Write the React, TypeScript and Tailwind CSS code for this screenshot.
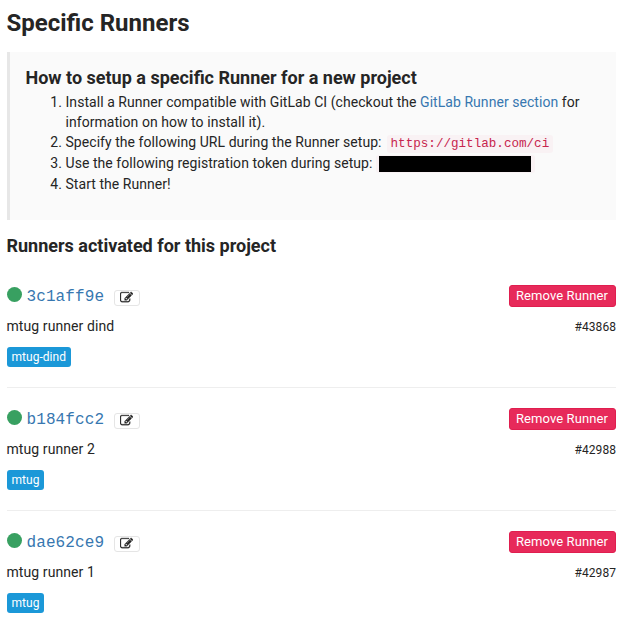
const runners = [
  { token: '3c1aff9e', name: 'mtug runner dind', id: '#43868', tag: 'mtug-dind' },
  { token: 'b184fcc2', name: 'mtug runner 2', id: '#42988', tag: 'mtug' },
  { token: 'dae62ce9', name: 'mtug runner 1', id: '#42987', tag: 'mtug' },
];

function EditIcon() {
  return (
    <svg viewBox="0 0 1792 1792" className="h-[13px] w-[13px]" fill="currentColor" stroke="currentColor" strokeWidth="40">
      <path d="M888 1184l116-116-152-152-116 116v56h96v96h56zm440-720q-16-16-33 1l-350 350q-17 17-1 33t33-1l350-350q17-17 1-33zm80 594v190q0 119-84.5 203.5t-203.5 84.5h-832q-119 0-203.5-84.5t-84.5-203.5v-832q0-119 84.5-203.5t203.5-84.5h832q63 0 117 25 15 7 18 23 3 17-9 29l-49 49q-14 14-32 8-23-6-45-6h-832q-66 0-113 47t-47 113v832q0 66 47 113t113 47h832q66 0 113-47t47-113v-126q0-13 9-22l64-64q15-15 35-7t20 29zm-96-738l288 288-672 672h-288v-288zm444 132l-92 92-288-288 92-92q28-28 68-28t68 28l152 152q28 28 28 68t-28 68z" />
    </svg>
  );
}

export default function App() {
  return (
    <main className="h-[624px] overflow-hidden bg-white pl-[7px] pr-[11px] pt-2 font-['Roboto',sans-serif] text-[14px] leading-5 text-[#252525]">
      <h3 className="-ml-[0.5px] h-11 text-[24px] font-bold leading-[30px]">Specific Runners</h3>
      <section className="h-[168px] border-l-[3px] border-[#e7e7e7] bg-[#fafafa] pl-[15.5px] pt-4">
        <h4 className="text-[18px] font-bold leading-5">How to setup a specific Runner for a new project</h4>
        <ol className="list-decimal pl-10 pt-1 tracking-[0.05px]">
          <li className="w-[530px]">
            Install a Runner compatible with GitLab CI (checkout the <a className="text-[#3777b0]">GitLab Runner section</a> for
            information on how to install it).
          </li>
          <li className="h-[21px]">
            Specify the following URL during the Runner setup:{' '}
            <code className="ml-[1.5px] rounded-[3px] bg-[#f9f2f4] px-1 py-0.5 font-['Liberation_Mono',monospace] text-[12.6px] tracking-normal text-[#c7254e]">https://gitlab.com/ci</code>
          </li>
          <li className="h-[21px]">
            Use the following registration token during setup:{' '}
            <code className="inline-flex h-[18px] w-[159px] items-center rounded-[3px] bg-[#f9f2f4] pl-[3px] align-[-4px]">
              <span className="h-4 w-[152px] bg-black" />
            </code>
          </li>
          <li>Start the Runner!</li>
        </ol>
      </section>
      <h4 className="-ml-[0.5px] mt-4 text-[18px] font-bold leading-5">Runners activated for this project</h4>
      <ul className="mt-[9px]">
        {runners.map((r) => (
          <li key={r.token} className="h-[123px] border-b border-[#eeeeee] pt-5">
            <div className="flex h-[22px] items-start justify-between">
              <div className="flex">
                <span className="mt-[2px] h-[15px] w-[15px] rounded-full bg-[#38a061]" />
                <span className="ml-[4.5px] h-[22px] w-[77.5px] font-['Liberation_Mono',monospace] text-[16px] leading-6 tracking-[0.1px] text-[#3777b0]">{r.token}</span>
                <button className="ml-[10px] mt-[5px] flex h-4 w-[26px] items-center justify-center rounded-[3px] border border-[#e5e5e5] bg-white pb-px pr-px">
                  <EditIcon />
                </button>
              </div>
              <button className="h-[22px] w-[107px] rounded-[3px] border border-[#e01e4f] bg-[#e72a5a] pr-px text-[13px] leading-5 tracking-[0.1px] text-white">Remove Runner</button>
            </div>
            <div className="mt-[9px] flex justify-between leading-5">
              <span className="-ml-[0.5px] tracking-[0.08px]">{r.name}</span>
              <small className="text-[12px] leading-[22px] tracking-[0.05px]">{r.id}</small>
            </div>
            <span className="mt-[9px] inline-block h-5 rounded-[3px] bg-[#1b98d8] pl-[4.5px] pr-[5px] text-[12px] leading-5 tracking-[0.03px] text-white">{r.tag}</span>
          </li>
        ))}
      </ul>
    </main>
  );
}
